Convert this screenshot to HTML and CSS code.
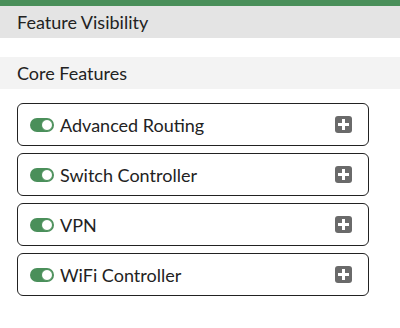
FILE: index.html
```html
<!DOCTYPE html>
<html>
<head>
<title>Feature Visibility</title>
<link rel="stylesheet" href="styles.css">
</head>
<body>
<div class="topBar"></div>
<div class="pageTitle">Feature Visibility</div>
<div class="section">
  <div class="sectionTitle">Core Features</div>
  <div class="featList">
    <div class="feat">
      <span class="toggle"><span class="knob"></span></span>
      <span class="featName">Advanced Routing</span>
      <span class="plus"></span>
    </div>
    <div class="feat">
      <span class="toggle"><span class="knob"></span></span>
      <span class="featName">Switch Controller</span>
      <span class="plus"></span>
    </div>
    <div class="feat">
      <span class="toggle"><span class="knob"></span></span>
      <span class="featName">VPN</span>
      <span class="plus"></span>
    </div>
    <div class="feat">
      <span class="toggle"><span class="knob"></span></span>
      <span class="featName">WiFi Controller</span>
      <span class="plus"></span>
    </div>
  </div>
</div>
</body>
</html>
```

FILE: styles.css
```css
body { margin:0; padding:0; background:#ffffff; color:#222222; font-family:Lato, "Open Sans", sans-serif; font-size:18px; }
.topBar { height:6px; background:#4a8f5a; }
.pageTitle { height:32px; line-height:32px; padding-left:17px; background:#e4e4e4; }
.section { padding-top:19px; }
.sectionTitle { height:32px; line-height:32px; padding-left:17px; background:#f3f3f3; }
.featList { display:flex; flex-direction:column; gap:7px; padding:14px 31px 0 17px; }
.feat { display:flex; align-items:center; box-sizing:border-box; height:43px; border:1.5px solid #222222; border-radius:6px; padding:0 16px 0 12px; }
.toggle { position:relative; width:24px; height:14px; border-radius:7px; background:#4a8f5a; margin-right:6px; flex:none; }
.knob { position:absolute; right:1px; top:1px; width:10px; height:10px; border-radius:50%; background:#ffffff; border:1px solid #4a8f5a; }
.featName { flex:1; }
.plus { position:relative; width:17px; height:17px; border-radius:3px; background:#6a6a6a; flex:none; }
.plus::before, .plus::after { content:""; position:absolute; background:#ffffff; }
.plus::before { left:3px; right:3px; top:7px; height:3px; }
.plus::after { top:3px; bottom:3px; left:7px; width:3px; }
```
